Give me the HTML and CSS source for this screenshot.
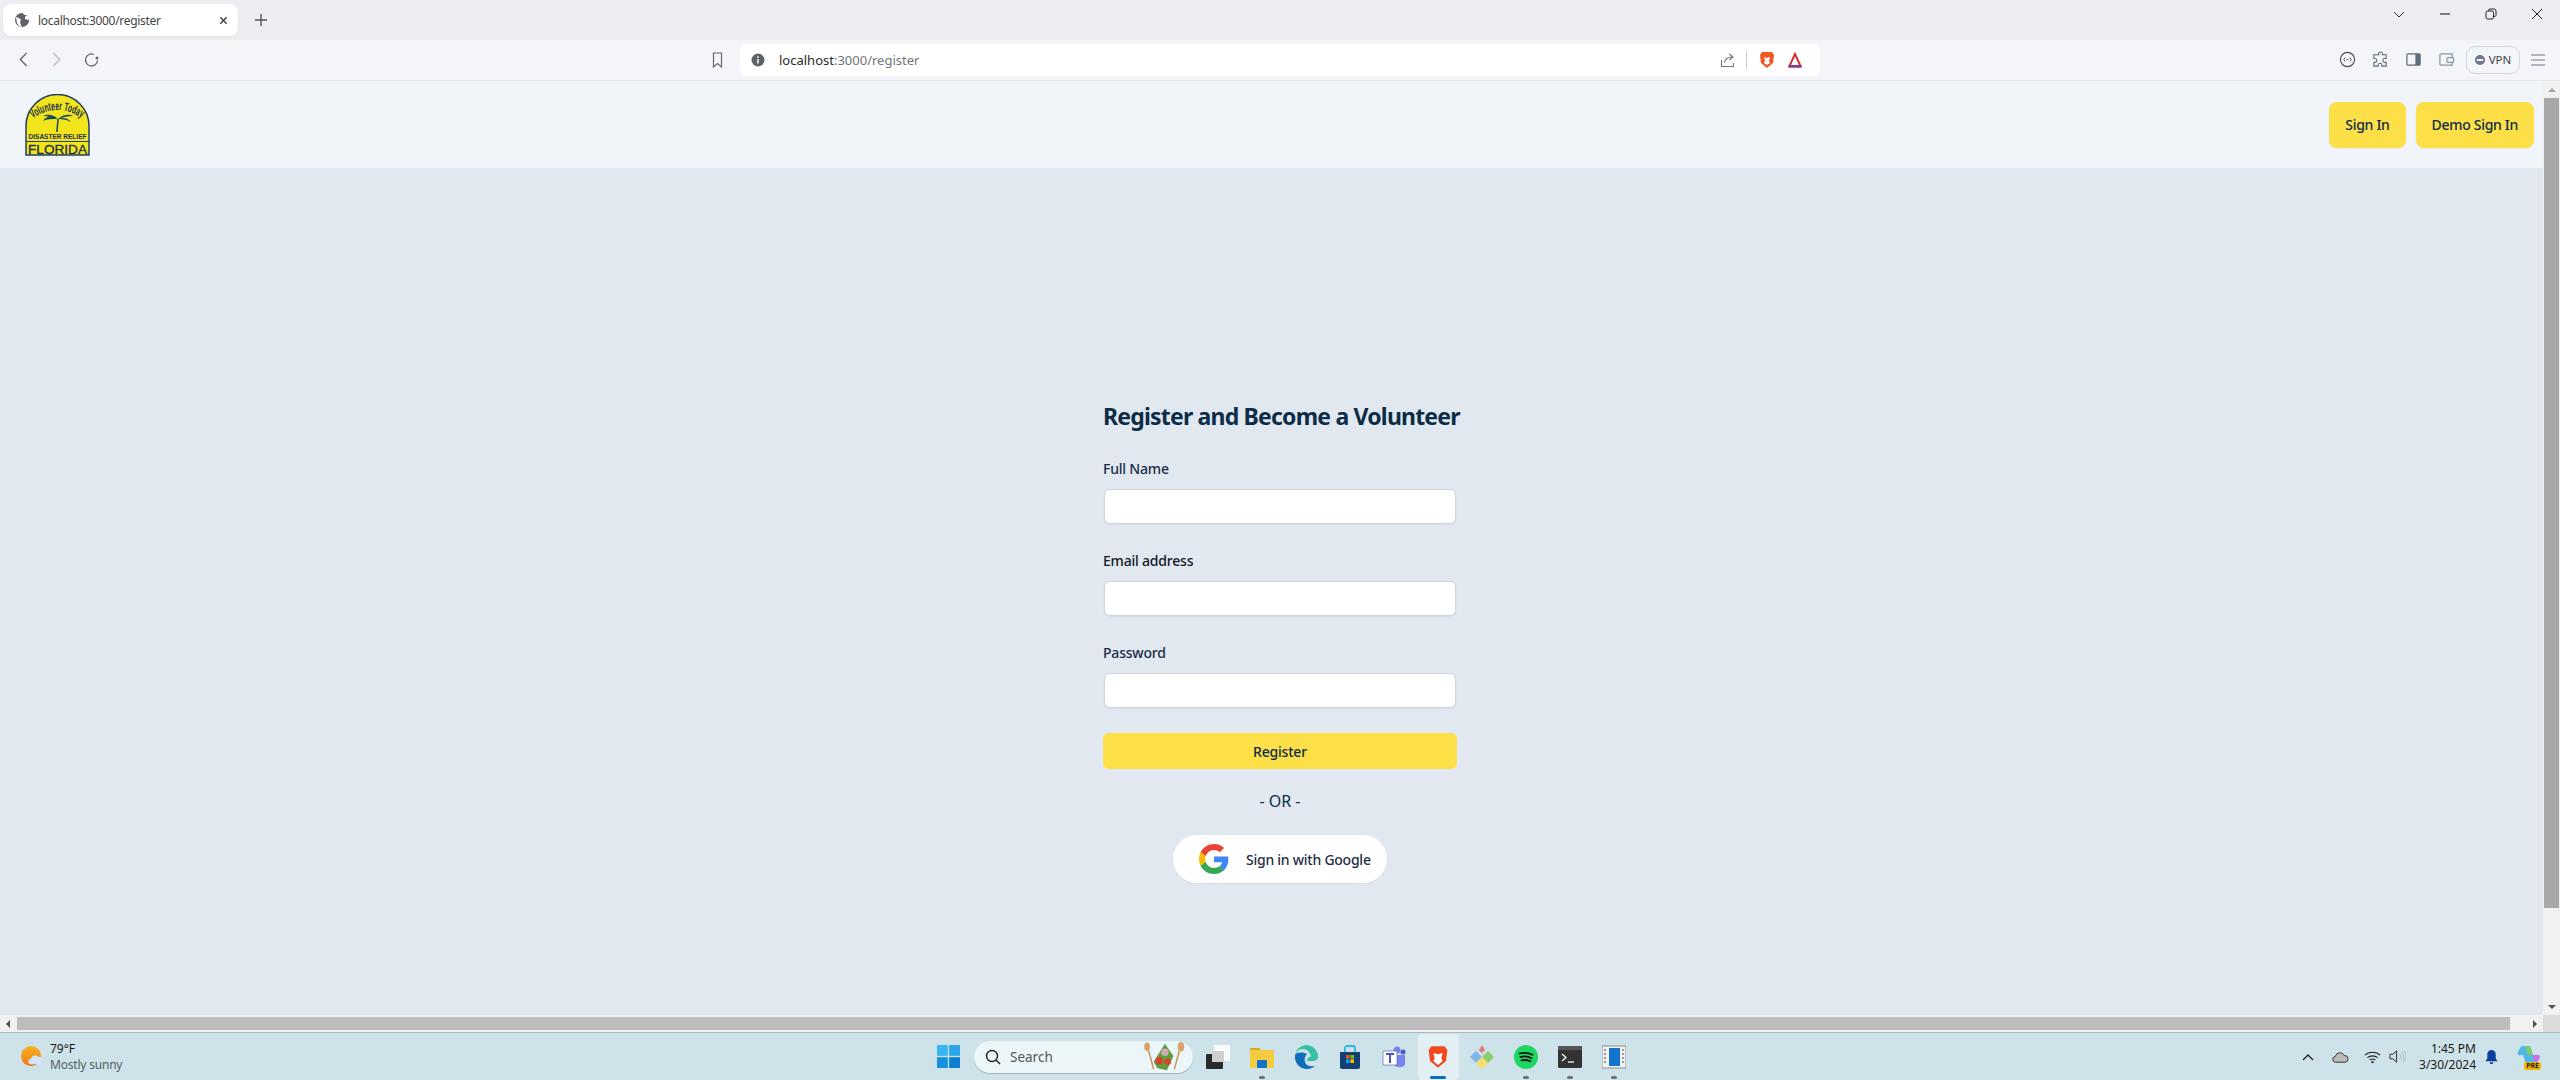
FILE: index.html
```html
<!DOCTYPE html>
<html lang="en">
<head>
    <meta charset="UTF-8">
    <title>localhost:3000/register</title>
    <link rel="stylesheet" href="styles.css">
</head>
<body>
    <!-- browser tab strip -->
    <div class="tab-strip">
        <div class="tab">
            <svg class="tab-globe" viewBox="0 0 16 16"><circle cx="8" cy="8" r="7" fill="#5f6368"/><path d="M2 5l3 1 2 2-1 2 1 3 1 2-3-1-2-3zM9 1l1 2 3 0-2 2 0 2 3 1 1-1-1-4-3-2z" fill="#fff"/></svg>
            <span class="tab-title">localhost:3000/register</span>
            <svg class="tab-close" viewBox="0 0 10 10"><path d="M1.5 1.5l7 7M8.5 1.5l-7 7" stroke="#444" stroke-width="1.6"/></svg>
        </div>
        <svg class="tab-new" viewBox="0 0 12 12"><path d="M6 0v12M0 6h12" stroke="#555" stroke-width="1.4"/></svg>
        <div class="window-controls">
            <svg viewBox="0 0 12 12"><path d="M1 4l5 5 5-5" fill="none" stroke="#333"/></svg>
            <svg viewBox="0 0 12 12"><path d="M1 6h10" stroke="#222" stroke-width="1.1"/></svg>
            <svg viewBox="0 0 12 12"><rect x="1" y="3" width="7.5" height="8" rx="1.5" fill="none" stroke="#222"/><path d="M3.5 3V2.5a1.5 1.5 0 0 1 1.5-1.500h4a2 2 0 0 1 2 2v4a1.500 1.500 0 0 1-2 1.500" fill="none" stroke="#222"/></svg>
            <svg viewBox="0 0 12 12"><path d="M1 1l10 10M11 1L1 11" stroke="#222"/></svg>
        </div>
    </div>

    <!-- browser toolbar -->
    <div class="toolbar">
        <div class="nav-buttons">
            <svg viewBox="0 0 10 14"><path d="M8 1L2 7l6 6" fill="none" stroke="#5d6b78" stroke-width="1.3"/></svg>
            <svg viewBox="0 0 10 14"><path d="M2 1l6 6-6 6" fill="none" stroke="#b6c0c9" stroke-width="1.3"/></svg>
            <svg viewBox="0 0 16 16"><path d="M13.500 8.500A6 6 0 1 1 10 2.500" fill="none" stroke="#5d6b78" stroke-width="1.300"/><circle cx="13" cy="6" r="1.500" fill="#5d6b78"/></svg>
        </div>
        <svg class="bookmark" viewBox="0 0 10 16"><path d="M1 1h8v14L5 11.500 1 15z" fill="none" stroke="#5d6b78" stroke-width="1.200"/></svg>
        <div class="url-bar">
            <svg class="url-info" viewBox="0 0 14 14"><circle cx="7" cy="7" r="6.500" fill="#5f6368"/><path d="M7 6v4.500M7 3.300v1.500" stroke="#fff" stroke-width="1.500"/></svg>
            <span class="url-text">localhost<span class="url-path">:3000/register</span></span>
            <svg class="url-share" viewBox="0 0 16 16"><path d="M1.500 8v6.500h12V11" fill="none" stroke="#777" stroke-width="1.100"/><path d="M4.500 11C5 6.500 8 5 12 5M9.500 2l3.500 3-3.500 3" fill="none" stroke="#777" stroke-width="1.100"/></svg>
            <span class="url-sep"></span>
            <svg class="url-brave" viewBox="0 0 16 18"><path d="M3 1h10l2 3-1 8-6 5-6-5-1-8z" fill="#f1581f"/><path d="M5 6l3 1 3-1-1 4 1 2-3 2-3-2 1-2z" fill="#fff"/></svg>
            <svg class="url-rewards" viewBox="0 0 16 16"><path d="M8 2L13.500 14H2.500z" fill="none" stroke="#d4312e" stroke-width="2"/><path d="M1.500 14.500h13" stroke="#7c3f9a" stroke-width="2.500"/></svg>
        </div>
        <div class="toolbar-right">
            <svg class="tool-icon" viewBox="0 0 18 18"><circle cx="9" cy="9" r="7.500" fill="none" stroke="#4a4a4a" stroke-width="1.200"/><path d="M6.500 7L5 9l1.500 2M11.500 7L13 9l-1.500 2M8 9h2" fill="none" stroke="#4a4a4a"/></svg>
            <svg class="tool-icon" viewBox="0 0 18 18"><path d="M7 3a2 2 0 0 1 4 0v1h4v4h-1.500a2 2 0 0 0 0 4H15v4h-4.500v-1a2 2 0 0 0-4 0v1H2v-4h1a2 2 0 0 0 0-4H2V4h5z" fill="none" stroke="#5d6b78" stroke-width="1.200"/></svg>
            <svg class="tool-icon" viewBox="0 0 18 18"><rect x="2" y="3" width="14" height="12" rx="1.200" fill="none" stroke="#5d6b78" stroke-width="1.300"/><rect x="11" y="3" width="5" height="12" fill="#5d6b78"/></svg>
            <svg class="tool-icon" viewBox="0 0 18 18"><path d="M15 7V3H3a1 1 0 0 0-1 1v10a1 1 0 0 0 1 1h12v-3" fill="none" stroke="#8a97a3" stroke-width="1.300"/><rect x="9.500" y="7" width="7" height="5" rx="1" fill="none" stroke="#8a97a3" stroke-width="1.300"/></svg>
            <div class="vpn-pill"><span class="vpn-dot"></span>VPN</div>
            <svg class="tool-menu" viewBox="0 0 14 12"><path d="M0 1h14M0 6h14M0 11h14" stroke="#6b7783" stroke-width="1.100"/></svg>
        </div>
    </div>

    <!-- page viewport -->
    <div class="viewport">
        <div class="page">
            <header class="site-header">
                <svg class="site-logo" viewBox="0 0 65 62">
                    <defs><path id="logo-arc" d="M7 25Q32 7 58 25"/></defs>
                    <path d="M1 61V32A31.500 31.500 0 0 1 64 32V61z" fill="#f3e51b" stroke="#1f3f63" stroke-width="1.500"/>
                    <text class="logo-arc-text"><textPath href="#logo-arc" startOffset="1" textLength="52" lengthAdjust="spacingAndGlyphs">Volunteer Today</textPath></text>
                    <path d="M32 38C32 33 33 29 33 25" fill="none" stroke="#164a5a" stroke-width="1.500"/>
                    <path d="M32 25C27 21 21 22 18 27c4-2 9-2 14-2zM33 25c-5-5-11-5-15-3 5 0 10 1 15 3zM33 25c5-5 12-5 15-3-5 0-10 1-15 3zM33 25c5-2 10-1 13 3-3-2-8-3-13-3z" fill="#164a5a"/>
                    <text class="logo-relief" x="3.500" y="45" textLength="58" lengthAdjust="spacingAndGlyphs">DISASTER RELIEF</text>
                    <path d="M1 47.500h63" stroke="#1f3f63" stroke-width="1.200"/>
                    <text class="logo-florida" x="3" y="59.500" textLength="59" lengthAdjust="spacingAndGlyphs">FLORIDA</text>
                </svg>
                <div class="header-buttons">
                    <a class="btn-yellow" href="#">Sign In</a>
                    <a class="btn-yellow" href="#">Demo Sign In</a>
                </div>
            </header>
            <main class="page-main">
                <form class="register-form">
                    <h1 class="form-title">Register and Become a Volunteer</h1>
                    <label class="form-label">Full Name</label>
                    <input class="form-input" type="text">
                    <label class="form-label form-label-dark">Email address</label>
                    <input class="form-input" type="email">
                    <label class="form-label">Password</label>
                    <input class="form-input" type="password">
                    <button class="btn-register" type="button">Register</button>
                    <div class="or-line">- OR -</div>
                    <button class="btn-google" type="button">
                        <svg class="google-icon" viewBox="0 0 48 48">
                            <path fill="#EA4335" d="M24 9.500c3.540 0 6.710 1.220 9.210 3.600l6.850-6.850C35.900 2.380 30.470 0 24 0 14.620 0 6.510 5.380 2.560 13.220l7.980 6.190C12.430 13.720 17.740 9.500 24 9.500z"/>
                            <path fill="#4285F4" d="M46.980 24.550c0-1.570-.15-3.090-.38-4.550H24v9.020h12.940c-.58 2.960-2.260 5.480-4.780 7.180l7.730 6c4.510-4.180 7.090-10.360 7.090-17.650z"/>
                            <path fill="#FBBC05" d="M10.530 28.590c-.48-1.450-.76-2.990-.76-4.590s.27-3.140.76-4.590l-7.980-6.190C.92 16.460 0 20.120 0 24c0 3.880.92 7.540 2.560 10.780l7.970-6.190z"/>
                            <path fill="#34A853" d="M24 48c6.480 0 11.930-2.130 15.890-5.810l-7.730-6c-2.150 1.450-4.920 2.300-8.160 2.300-6.260 0-11.570-4.220-13.470-9.910l-7.980 6.190C6.510 42.620 14.620 48 24 48z"/>
                        </svg>
                        <span>Sign in with Google</span>
                    </button>
                </form>
            </main>
        </div>
        <div class="scroll-v">
            <span class="arrow-up"></span>
            <div class="scroll-v-track"><div class="scroll-v-thumb"></div></div>
            <span class="arrow-down"></span>
        </div>
    </div>

    <div class="scroll-h">
        <span class="arrow-left"></span>
        <div class="scroll-h-thumb"></div>
        <span class="arrow-right"></span>
        <div class="scroll-corner"></div>
    </div>

    <!-- windows taskbar -->
    <footer class="taskbar">
        <div class="weather">
            <svg class="weather-icon" viewBox="0 0 24 24">
                <defs><linearGradient id="sun" x1="0" y1="0" x2="0" y2="1"><stop offset="0" stop-color="#f7b21f"/><stop offset="1" stop-color="#ee7a1b"/></linearGradient></defs>
                <circle cx="11" cy="11" r="11" fill="url(#sun)"/>
                <path d="M11 20a3 3 0 0 1 0-6 4.500 4.500 0 0 1 8-2 3.500 3.500 0 0 1 2 8z" fill="#d5e2f7"/>
            </svg>
            <div class="weather-text">
                <span class="weather-temp">79°F</span>
                <span class="weather-desc">Mostly sunny</span>
            </div>
        </div>
        <div class="task-center">
            <svg class="start-icon" viewBox="0 0 24 24"><rect width="11.300" height="11.300" fill="#38b6f1"/><rect x="12.700" width="11.300" height="11.300" fill="#2aa5ea"/><rect y="12.700" width="11.300" height="11.300" fill="#1591de"/><rect x="12.700" y="12.700" width="11.300" height="11.300" fill="#0c7fd0"/></svg>
            <div class="task-search">
                <svg class="search-glass" viewBox="0 0 16 16"><circle cx="7" cy="7" r="5.500" fill="none" stroke="#222" stroke-width="1.400"/><path d="M11 11l4 4" stroke="#222" stroke-width="1.500"/></svg>
                <span>Search</span>
                <svg class="search-art" viewBox="0 0 46 34">
                    <path d="M6 8l6 22" stroke="#c8915a" stroke-width="1.500"/><ellipse cx="5" cy="6" rx="3" ry="4.500" fill="#d6a26a"/>
                    <path d="M40 8l-6 22" stroke="#c8915a" stroke-width="1.500"/><ellipse cx="41" cy="6" rx="3.500" ry="5" fill="#d6a26a"/>
                    <path d="M12 22L24 3l9 13-7 15-10-2z" fill="#5f9e3c"/><circle cx="18" cy="21" r="4" fill="#d8432f"/><circle cx="24" cy="12" r="4" fill="#cfa9b8"/><circle cx="27" cy="22" r="3.500" fill="#d8432f"/>
                </svg>
            </div>
            <div class="task-app">
                <svg viewBox="0 0 24 24"><rect x="8" y="0" width="16" height="16" fill="#fafafa"/><rect x="0" y="9" width="17" height="15" rx="1" fill="#2a2a2a"/><rect x="6" y="6" width="12" height="11" fill="#cfcfcf"/></svg>
            </div>
            <div class="task-app running">
                <svg viewBox="0 0 24 24"><path d="M0 4a1 1 0 0 1 1-1h8l2 2h12a1 1 0 0 1 1 1v16a1 1 0 0 1-1 1H1a1 1 0 0 1-1-1z" fill="#f7cb3f"/><path d="M0 3h9l2 2H0z" fill="#d9a520"/><path d="M7 16a1 1 0 0 1 1-1h8a1 1 0 0 1 1 1v7H7z" fill="#0f74c7"/></svg>
            </div>
            <div class="task-app">
                <svg viewBox="0 0 24 24"><path d="M12 0a12 12 0 0 1 12 12c0 3-3 4-6 4h-5c0-3 2-4 4-4.500C16 7 13 4 9 4 5 4 2 7 1 10a12 12 0 0 1 11-10z" fill="#35c1a5"/><path d="M1 10C0 18 6 24 13 24c3 0 6-1 8-3-4 1-9 0-10-4-1-3 0-6 2-8-5-2-10-2-12 1z" fill="#0f6fbd"/></svg>
            </div>
            <div class="task-app">
                <svg viewBox="0 0 24 24"><path d="M2 7h20v15a2 2 0 0 1-2 2H4a2 2 0 0 1-2-2z" fill="#123f72"/><path d="M7 7V3a2 2 0 0 1 2-2h6a2 2 0 0 1 2 2v4" fill="none" stroke="#2bb5e8" stroke-width="1.800"/><rect x="8" y="10" width="3.600" height="3.600" fill="#f25022"/><rect x="12.400" y="10" width="3.600" height="3.600" fill="#7fba00"/><rect x="8" y="14.400" width="3.600" height="3.600" fill="#00a4ef"/><rect x="12.400" y="14.400" width="3.600" height="3.600" fill="#ffb900"/></svg>
            </div>
            <div class="task-app">
                <svg viewBox="0 0 24 24"><circle cx="15" cy="5" r="3.500" fill="#7b83eb"/><circle cx="21" cy="7" r="2.500" fill="#5059c9"/><path d="M11 10h12v8a4 4 0 0 1-4 4h-3a5 5 0 0 1-5-5z" fill="#7b83eb"/><rect x="1" y="6" width="14" height="14" rx="1" fill="#fff" stroke="#4b53bc" stroke-width=".6"/><path d="M4 9h8M8 9v9" stroke="#4b53bc" stroke-width="2"/></svg>
            </div>
            <div class="task-app active">
                <svg viewBox="0 0 16 18"><path d="M3 1h10l2 3-1 8-6 5-6-5-1-8z" fill="#f1481f"/><path d="M4.500 6l3.500 1 3.500-1-1 4 1 2-3.500 3-3.500-3 1-2z" fill="#fff"/></svg>
            </div>
            <div class="task-app">
                <svg viewBox="0 0 24 24"><path d="M9 5l3-5 3 5-3 3z" fill="#e4797c"/><path d="M6 6l6 6-6 6-6-6z" fill="#7fb6ec"/><path d="M18 6l6 6-6 6-6-6z" fill="#8ccf6a"/><path d="M12 12l6 6-6 6-6-6z" fill="#f3de6e"/></svg>
            </div>
            <div class="task-app running">
                <svg viewBox="0 0 24 24"><circle cx="12" cy="12" r="12" fill="#1ed760"/><path d="M5.500 8.500c4-1 9-1 13 1.200M6.500 12c3.500-.8 8-.6 11 1.200M7.500 15.300c3-.6 6-.4 8.800 1" fill="none" stroke="#111" stroke-width="1.800" stroke-linecap="round"/></svg>
            </div>
            <div class="task-app running">
                <svg viewBox="0 0 24 24"><rect y="1" width="24" height="22" rx="1.500" fill="#333"/><rect y="1" width="24" height="4" fill="#555"/><path d="M4 9l4 3.500L4 16" fill="none" stroke="#eee" stroke-width="1.400"/><path d="M10 17h6" stroke="#eee" stroke-width="1.400"/></svg>
            </div>
            <div class="task-app running">
                <svg viewBox="0 0 24 24"><rect y="1" width="24" height="22" fill="#f2f2f2" stroke="#777" stroke-width=".8"/><rect x="7" y="3" width="11" height="18" fill="#1173cc"/><path d="M3 4v16M21 4v16" stroke="#999" stroke-width="2" stroke-dasharray="2 2"/></svg>
            </div>
        </div>
        <div class="tray">
            <svg class="tray-chevron" viewBox="0 0 12 8"><path d="M1 7l5-5 5 5" fill="none" stroke="#222" stroke-width="1.300"/></svg>
            <svg class="tray-cloud" viewBox="0 0 18 12"><path d="M4 11.500a3 3 0 0 1-.500-6 5 5 0 0 1 9.500-1 3.500 3.500 0 0 1 1 7z" fill="#bbb" stroke="#333" stroke-width="1"/></svg>
            <svg class="tray-wifi" viewBox="0 0 18 14"><path d="M1 5c4-4 12-4 16 0M3.500 7.700c3-2.500 8-2.500 11 0M6 10.200c1.800-1.300 4.200-1.300 6 0" fill="none" stroke="#222" stroke-width="1.100"/><circle cx="9" cy="12.500" r="1.200" fill="#222"/></svg>
            <svg class="tray-speaker" viewBox="0 0 18 16"><path d="M1 5.500h3L8 2v12L4 10.500H1z" fill="none" stroke="#222"/><path d="M11 5a4 4 0 0 1 0 6M13.500 3a7 7 0 0 1 0 10M15.500 1.500a9 9 0 0 1 0 13" fill="none" stroke="#aaa" stroke-width=".8"/></svg>
            <div class="tray-clock"><span>1:45 PM</span><span>3/30/2024</span></div>
            <svg class="tray-bell" viewBox="0 0 16 16"><path d="M8 1a4.500 4.500 0 0 1 4.500 4.500V10l2 3h-13l2-3V5.500A4.500 4.500 0 0 1 8 1zM6 14h4a2 2 0 0 1-4 0z" fill="#0b3f9a"/></svg>
            <div class="tray-copilot">
                <svg viewBox="0 0 24 20"><path d="M8 1h5l3 9h5c2 0 2 2 1 4l-2 3c-1 2-3 2-5 2h-6L6 10H2c-1 0-2-1-1-3l2-4c1-2 3-2 5-2z" fill="#4fb8e8"/><path d="M13 1l3 9h-5L8 1z" fill="#7ecb6a"/><path d="M16 10h5c2 0 2 2 1 4l-2 3-3-1z" fill="#d66ae0"/></svg>
                <span class="copilot-badge">PRE</span>
            </div>
        </div>
    </footer>
</body>
</html>
```

FILE: styles.css
```css
:root {
    --slate-100: #f1f5f9;
    --slate-200: #e2e8f0;
    --yellow: #fde047;
    --navy: #0c2d48;
    --ui-font: "Noto Sans", "Open Sans", Arial, sans-serif;
}

* {
    box-sizing: border-box;
}

body {
    margin: 0;
    width: 2560px;
    height: 1080px;
    overflow: hidden;
    display: flex;
    flex-direction: column;
    font-family: var(--ui-font);
    color: var(--navy);
    background-color: var(--slate-200);
}

svg {
    display: block;
    flex-shrink: 0;
}

/* tab strip */
.tab-strip {
    height: 40px;
    background-color: #eceef2;
    display: flex;
    align-items: flex-start;
    padding: 4px 0 0 3px;
}

.tab {
    width: 235px;
    height: 32px;
    background-color: #fff;
    border-radius: 8px;
    display: flex;
    align-items: center;
    padding: 0 9px 0 11px;
    box-shadow: 0 1px 3px rgba(0, 0, 0, 0.06);
}

.tab-globe {
    width: 16px;
    height: 16px;
}

.tab-title {
    margin-left: 8px;
    font-size: 12px;
    letter-spacing: -0.3px;
    color: #444;
    flex-grow: 1;
}

.tab-close {
    width: 9px;
    height: 9px;
    margin-right: 1px;
}

.tab-new {
    width: 12px;
    height: 12px;
    margin: 10px 0 0 17px;
}

.window-controls {
    margin-left: auto;
    display: flex;
    gap: 34px;
    padding: 4px 17px 0 0;
}

.window-controls svg {
    width: 12px;
    height: 12px;
}

/* toolbar */
.toolbar {
    height: 41px;
    background-color: #f3f5f8;
    border-bottom: 1px solid #e6e9ee;
    display: flex;
    align-items: center;
    padding: 0 0 1px 18px;
}

.nav-buttons {
    display: flex;
    align-items: center;
    gap: 22px;
    width: 694px;
}

.nav-buttons svg {
    width: 11px;
    height: 15px;
}

.nav-buttons svg:last-child {
    width: 16px;
    height: 16px;
}

.bookmark {
    width: 11px;
    height: 16px;
}

.url-bar {
    margin-left: 17px;
    width: 1080px;
    height: 32px;
    background-color: #fff;
    border-radius: 8px;
    display: flex;
    align-items: center;
    padding: 0 17px 0 11px;
}

.url-info {
    width: 14px;
    height: 14px;
}

.url-text {
    margin-left: 14px;
    font-size: 13px;
    color: #2b2b2b;
    flex-grow: 1;
}

.url-path {
    color: #70757a;
}

.url-share {
    width: 16px;
    height: 16px;
}

.url-sep {
    width: 1px;
    height: 18px;
    background-color: #c9ced4;
    margin: 0 12px 0 10px;
}

.url-brave {
    width: 16px;
    height: 18px;
}

.url-rewards {
    width: 16px;
    height: 16px;
    margin-left: 12px;
}

.toolbar-right {
    margin-left: auto;
    display: flex;
    align-items: center;
    gap: 16px;
    padding-right: 15px;
}

.tool-icon {
    width: 17px;
    height: 17px;
}

.vpn-pill {
    width: 54px;
    height: 28px;
    border: 1px solid #d3d9e0;
    border-radius: 9px;
    margin-left: -5px;
    margin-right: -5px;
    display: flex;
    align-items: center;
    justify-content: center;
    gap: 4px;
    font-size: 11.500px;
    color: #444;
}

.vpn-dot {
    position: relative;
    width: 10px;
    height: 10px;
    border-radius: 50%;
    background-color: #6f7890;
}

.vpn-dot::after {
    content: "";
    position: absolute;
    left: 2px;
    right: 2px;
    top: 4px;
    height: 2px;
    background-color: #f3f5f8;
}

.tool-menu {
    width: 14px;
    height: 12px;
}

/* page */
.viewport {
    flex-grow: 1;
    min-height: 0;
    display: flex;
}

.page {
    flex-grow: 1;
    display: flex;
    flex-direction: column;
}

.site-header {
    height: 87px;
    background-color: var(--slate-100);
    display: flex;
    align-items: center;
    justify-content: space-between;
    padding: 0 9px 0 25px;
}

.site-logo {
    width: 65px;
    height: 62px;
}

.logo-arc-text {
    font-family: "Liberation Sans", Arial, sans-serif;
    font-size: 12px;
    font-weight: 700;
    fill: #1c2f4a;
}

.logo-relief {
    font-family: "Liberation Sans", Arial, sans-serif;
    font-size: 7px;
    font-weight: 700;
    fill: #1c2f4a;
}

.logo-florida {
    font-family: "Liberation Sans", Arial, sans-serif;
    font-size: 13px;
    stroke: #1c2f4a;
    stroke-width: 0.3px;
    fill: #1c2f4a;
}

.header-buttons {
    display: flex;
    gap: 10px;
}

.btn-yellow {
    height: 46px;
    padding: 0 16px;
    display: flex;
    align-items: center;
    background-color: var(--yellow);
    border-radius: 8px;
    box-shadow: 0 1px 2px rgba(0, 0, 0, 0.05);
    color: var(--navy);
    text-decoration: none;
    font-size: 14px;
    font-weight: 500;
    letter-spacing: -0.3px;
}

.page-main {
    flex-grow: 1;
    display: flex;
    justify-content: center;
    padding-left: 17px;
    background-color: var(--slate-200);
}

.register-form {
    width: 354px;
    padding-top: 232px;
    display: flex;
    flex-direction: column;
}

.form-title {
    margin: 0 0 27px;
    font-size: 23px;
    letter-spacing: -0.8px;
    line-height: 32px;
    font-weight: 700;
    white-space: nowrap;
}

.form-label {
    font-size: 14px;
    font-weight: 500;
    letter-spacing: -0.2px;
    line-height: 20px;
    color: #1b2d47;
    margin-bottom: 10px;
}

.form-label-dark {
    color: #111827;
}

.form-input {
    height: 35px;
    margin: 0 1px 27px;
    border: 1px solid #d1d5db;
    border-radius: 6px;
    background-color: #fff;
    box-shadow: 0 1px 2px rgba(0, 0, 0, 0.05);
}

.btn-register {
    height: 36px;
    margin-top: -2px;
    border: none;
    border-radius: 6px;
    background-color: var(--yellow);
    color: var(--navy);
    font-family: var(--ui-font);
    font-size: 14px;
    font-weight: 500;
    letter-spacing: -0.2px;
}

.or-line {
    margin-top: 20px;
    border-bottom: 1px solid #e1e6ed;
    height: 25px;
    text-align: center;
    font-size: 16px;
    line-height: 24px;
}

.btn-google {
    align-self: center;
    width: 214px;
    height: 48px;
    margin-top: 21px;
    border: none;
    border-radius: 24px;
    background-color: #fff;
    box-shadow: 0 1px 2px rgba(0, 0, 0, 0.06);
    display: flex;
    align-items: center;
    gap: 17px;
    padding: 0 0 0 26px;
    color: #1f2d45;
    font-family: var(--ui-font);
    font-size: 14px;
    font-weight: 500;
    letter-spacing: -0.25px;
    white-space: nowrap;
}

.google-icon {
    width: 30px;
    height: 30px;
}

/* scrollbars */
.scroll-v {
    width: 17px;
    background-color: #f1f1f1;
    display: flex;
    flex-direction: column;
    align-items: center;
}

.arrow-up,
.arrow-down {
    width: 0;
    height: 0;
    border-left: 4px solid transparent;
    border-right: 4px solid transparent;
    margin: 7px 0 6px;
}

.arrow-up {
    border-bottom: 4px solid #a3a3a3;
}

.arrow-down {
    border-top: 4px solid #505050;
}

.scroll-v-track {
    flex-grow: 1;
    width: 100%;
    padding: 0 1px 0 1px;
}

.scroll-v-thumb {
    height: 810px;
    background-color: #a8a8a8;
}

.scroll-h {
    height: 17px;
    background-color: #f1f1f1;
    display: flex;
    align-items: center;
    flex-shrink: 0;
}

.arrow-left,
.arrow-right {
    width: 0;
    height: 0;
    border-top: 4px solid transparent;
    border-bottom: 4px solid transparent;
}

.arrow-left {
    border-right: 4px solid #505050;
    margin: 0 7px 0 6px;
}

.arrow-right {
    border-left: 4px solid #505050;
    margin: 0 6px 0 23px;
}

.scroll-h-thumb {
    flex-grow: 1;
    height: 13px;
    background-color: #bdbdbd;
}

.scroll-corner {
    width: 17px;
    height: 17px;
    background-color: #dcdcdc;
}

/* taskbar */
.taskbar {
    height: 48px;
    flex-shrink: 0;
    border-top: 1px solid #a9b9bd;
    background-color: #cde3e9;
    display: flex;
    align-items: center;
}

.weather {
    width: 937px;
    display: flex;
    align-items: center;
    gap: 7px;
    padding-left: 21px;
}

.weather-icon {
    width: 22px;
    height: 22px;
}

.weather-text {
    display: flex;
    flex-direction: column;
    font-size: 12px;
    line-height: 16px;
}

.weather-temp {
    color: #1a1a1a;
}

.weather-desc {
    color: #555f66;
    letter-spacing: -0.2px;
}

.task-center {
    display: flex;
    align-items: center;
}

.start-icon {
    width: 23px;
    height: 23px;
}

.task-search {
    width: 219px;
    height: 32px;
    margin: 0 3px 0 14px;
    padding: 0 6px 0 11px;
    border-radius: 16px;
    background-color: #ecf5f7;
    box-shadow: 0 1px 1px rgba(0, 0, 0, 0.2);
    display: flex;
    align-items: center;
    gap: 9px;
    font-size: 13.500px;
    color: #555;
}

.search-glass {
    width: 16px;
    height: 16px;
}

.search-art {
    width: 46px;
    height: 32px;
    margin-left: auto;
}

.task-app {
    position: relative;
    width: 44px;
    height: 46px;
    display: flex;
    align-items: center;
    justify-content: center;
}

.task-app svg {
    width: 24px;
    height: 24px;
}

.task-app.running::after,
.task-app.active::after {
    content: "";
    position: absolute;
    bottom: 1px;
    left: 19px;
    width: 6px;
    height: 3px;
    border-radius: 2px;
    background-color: #6b7479;
}

.task-app.active {
    background-color: #e2eff3;
    border-radius: 4px;
    box-shadow: 2px 0 0 #dbe9ee;
    width: 40px;
    margin: 0 2px;
}

.task-app.active::after {
    left: 12px;
    width: 16px;
    background-color: #0a6cc4;
}

.tray {
    margin-left: auto;
    display: flex;
    align-items: center;
    padding-right: 19px;
}

.tray-chevron {
    width: 12px;
    height: 8px;
}

.tray-cloud {
    width: 17px;
    height: 12px;
    margin-left: 18px;
}

.tray-wifi {
    width: 17px;
    height: 14px;
    margin-left: 15px;
}

.tray-speaker {
    width: 17px;
    height: 15px;
    margin-left: 8px;
}

.tray-clock {
    width: 70px;
    display: flex;
    flex-direction: column;
    align-items: flex-end;
    font-size: 12px;
    line-height: 16px;
    color: #1a1a1a;
}

.tray-bell {
    width: 15px;
    height: 15px;
    margin-left: 8px;
}

.tray-copilot {
    position: relative;
    width: 24px;
    height: 24px;
    margin-left: 18px;
}

.tray-copilot svg {
    width: 24px;
    height: 20px;
}

.copilot-badge {
    position: absolute;
    right: 0;
    bottom: -1px;
    padding: 0 2px;
    background-color: #f7b500;
    border-radius: 2px;
    color: #222;
    font-size: 7px;
    line-height: 8px;
    font-weight: 700;
}
```
